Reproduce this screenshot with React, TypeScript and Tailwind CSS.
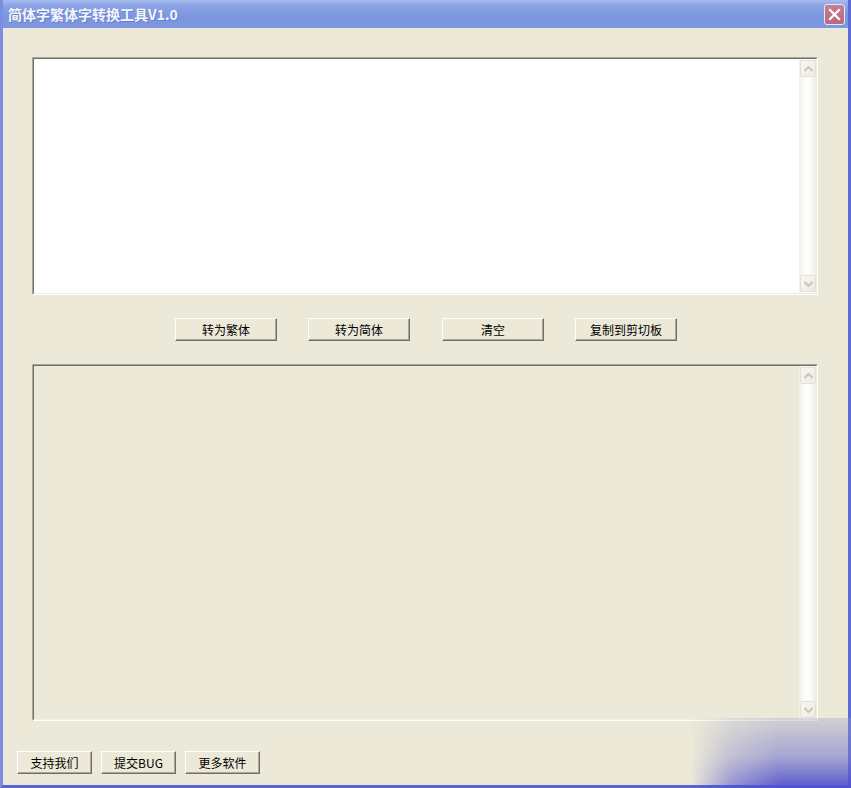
import React from "react";

const uiFont = {
  fontFamily: '"Noto Sans CJK SC", "Noto Sans", sans-serif',
};

function Chevron({ up }: { up: boolean }) {
  return (
    <svg width="9" height="6" viewBox="0 0 9 6" className="block">
      <path
        d={up ? "M0.5 5 L4.5 1 L8.5 5" : "M0.5 1 L4.5 5 L8.5 1"}
        fill="none"
        stroke="#c9c6b6"
        strokeWidth="2"
      />
    </svg>
  );
}

function ScrollButton({ up }: { up: boolean }) {
  return (
    <div className="flex h-[17px] w-[16px] items-center justify-center rounded-[2px] border border-[#e2e0d6] bg-[linear-gradient(to_bottom_right,#f7f6f1,#ecebe3)]">
      <Chevron up={up} />
    </div>
  );
}

function Scrollbar() {
  return (
    <div className="flex w-[17px] flex-col justify-between bg-[linear-gradient(to_right,#f1efe8,#fefefe_40%,#fefefe_60%,#eeede5)] p-[1px]">
      <ScrollButton up />
      <ScrollButton up={false} />
    </div>
  );
}

function TextBox({ height, bg }: { height: string; bg: string }) {
  return (
    <div className={`border-t border-l border-[#aca899] border-b-white border-r-white border-b border-r ${height}`}>
      <div className={`flex h-full border-t border-l border-[#716f64] border-b border-r border-b-[#f1efe2] border-r-[#f1efe2] ${bg}`}>
        <div className="flex-1" />
        <Scrollbar />
      </div>
    </div>
  );
}

function Btn({ label, w, extra = "" }: { label: string; w: string; extra?: string }) {
  return (
    <button
      className={`${w} ${extra} h-[23px] border border-t-white border-l-white border-b-[#716f64] border-r-[#716f64] bg-[#ece9d8] text-[12px] leading-none text-black shadow-[inset_-1px_-1px_0_#aca899]`}
      style={uiFont}
    >
      {label}
    </button>
  );
}

export default function App() {
  return (
    <div className="relative h-[788px] w-[851px] overflow-hidden bg-[#7a8edf]">
      <div className="flex h-full flex-col border-l-[3px] border-r-[3px] border-b-[3px] border-l-[#7b8ee2] border-r-[#5c6bd6] border-b-[#5a64d0]">
        {/* title bar */}
        <div className="flex h-[28px] items-center justify-between bg-[linear-gradient(to_bottom,#a7bbee,#8ba4e6_20%,#7b95de_60%,#7d97e0)] pl-[5px] pr-[3px]">
          <span
            className="text-[14px] font-bold text-[#f2f5fd] [text-shadow:1px_1px_0_#6b7fc4]"
            style={{ fontFamily: '"Noto Sans CJK SC", "Liberation Serif", serif' }}
          >
            简体字繁体字转换工具V1.0
          </span>
          <div className="flex h-[21px] w-[21px] items-center justify-center rounded-[3px] border border-[#e7e9f8] bg-[linear-gradient(to_bottom,#c87d93,#b9687f)]">
            <svg width="13" height="13" viewBox="0 0 13 13">
              <path d="M2 2 L11 11 M11 2 L2 11" stroke="white" strokeWidth="2.2" strokeLinecap="square" />
            </svg>
          </div>
        </div>

        {/* client area */}
        <div className="flex flex-1 flex-col bg-[#ece9d8] pt-[29px] pl-[29px] pr-[30px]">
          <TextBox height="h-[238px]" bg="bg-white" />

          <div className="flex h-[69px] items-center pl-[143px]">
            <Btn label="转为繁体" w="w-[102px]" />
            <Btn label="转为简体" w="w-[102px]" extra="ml-[31px]" />
            <Btn label="清空" w="w-[102px]" extra="ml-[32px]" />
            <Btn label="复制到剪切板" w="w-[102px]" extra="ml-[31px]" />
          </div>

          <TextBox height="h-[357px]" bg="bg-[#ece9d8]" />

          <div className="-ml-[15px] mt-[30px] flex gap-[9px]">
            <Btn label="支持我们" w="w-[75px]" />
            <Btn label="提交BUG" w="w-[75px]" />
            <Btn label="更多软件" w="w-[75px]" />
          </div>
        </div>
      </div>

      {/* corner glow over the lower right */}
      <div className="pointer-events-none absolute bottom-0 right-0 h-[70px] w-[160px] bg-[linear-gradient(to_bottom,rgba(160,160,200,0.35),rgba(120,120,205,0.6)_55%,rgba(80,80,205,0.95))] [mask-image:linear-gradient(to_right,transparent,rgba(0,0,0,0.6)_25%,black_55%)]" />
    </div>
  );
}
